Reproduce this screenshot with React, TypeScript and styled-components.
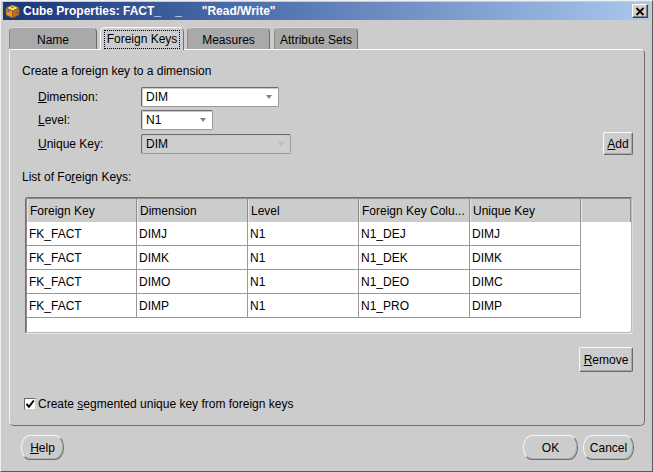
import React from 'react';
import styled, { createGlobalStyle } from 'styled-components';

const Global = createGlobalStyle`
  html, body { margin: 0; padding: 0; background: #cccccc; }
  body { font-family: "Liberation Sans", Arial, sans-serif; font-size: 12px; color: #000; }
  * { box-sizing: border-box; }
`;

const Window = styled.div`
  width: 653px;
  height: 472px;
  background: #cccccc;
  border: 1px solid;
  border-color: #efefef #5a5a5a #5a5a5a #efefef;
  padding: 1px 2px 2px 2px;
  display: flex;
  flex-direction: column;
`;

const TitleBar = styled.div`
  height: 18px;
  display: flex;
  align-items: center;
  padding: 0 2px 0 2px;
  background: linear-gradient(to right, #18357a 0%, #4a6aa8 35%, #a8c8ee 100%);
  color: #fff;
  font: bold 12px "Liberation Sans", Arial, sans-serif;
  white-space: pre;
`;

const TitleIcon = styled.svg`
  width: 15px;
  height: 15px;
  margin-right: 3px;
  flex: none;
`;

const TitleText = styled.span`
  flex: 1;
`;

const Gap = styled.span<{ $w: number }>`
  display: inline-block;
  width: ${p => p.$w}px;
`;

const CloseBtn = styled.div`
  width: 16px;
  height: 14px;
  background: #d4d0c8;
  border: 1px solid;
  border-color: #ffffff #404040 #404040 #ffffff;
  box-shadow: inset -1px -1px 0 #808080;
  display: flex;
  align-items: center;
  justify-content: center;
`;

const Body = styled.div`
  flex: 1;
  display: flex;
  flex-direction: column;
  padding: 0 6px 0 6px;
`;

const TabRow = styled.div`
  display: flex;
  margin-top: 7px;
  height: 22px;
  align-items: flex-end;
  position: relative;
  z-index: 1;
`;

const Tab = styled.div<{ $w: number; $active?: boolean; $ml: number }>`
  width: ${p => p.$w}px;
  margin-left: ${p => p.$ml}px;
  height: ${p => (p.$active ? 23 : 22)}px;
  margin-bottom: ${p => (p.$active ? -1 : 0)}px;
  border: 1px solid;
  border-bottom: none;
  border-color: ${p => (p.$active ? '#ffffff #707070 transparent #ffffff' : '#d8d8d8 #6a6a6a transparent #8a8a8a')};
  border-radius: 5px 5px 0 0;
  background: ${p => (p.$active ? '#cccccc' : '#a9a9a9')};
  display: flex;
  align-items: flex-start;
  justify-content: center;
  padding-top: 2px;
  font-size: 12px;
`;

const FocusLabel = styled.span`
  border: 1px dotted #000;
  padding: 1px 2px 2px 2px;
  line-height: 14px;
`;

const TabLabel = styled.span`
  padding-top: 3px;
  line-height: 14px;
`;

const Panel = styled.div`
  width: 636px;
  height: 377px;
  border: 1px solid;
  border-color: #ffffff #6e6e6e #6e6e6e #f4f4f4;
  border-radius: 0 5px 5px 5px;
  display: flex;
  flex-direction: column;
  padding: 0 11px 0 12px;
`;

const Heading = styled.div<{ $mt: number }>`
  margin-top: ${p => p.$mt}px;
  line-height: 14px;
  height: 14px;
`;

const FormRow = styled.div<{ $mt: number; $h: number }>`
  display: flex;
  align-items: center;
  margin-top: ${p => p.$mt}px;
  height: ${p => p.$h}px;
  padding-left: 16px;
`;

const Label = styled.div`
  width: 103px;
  line-height: 14px;
`;

const Combo = styled.div<{ $w: number; $disabled?: boolean }>`
  width: ${p => p.$w}px;
  height: 20px;
  border: 1px solid;
  border-color: #6a6a6a #9a9a9a #9a9a9a #6a6a6a;
  border-radius: 2px;
  background: ${p => (p.$disabled ? '#cecece' : '#ffffff')};
  box-shadow: inset 1px 1px 0 #c8c8c8;
  display: flex;
  align-items: center;
  padding: 0 4px;
  line-height: 14px;
`;

const ComboText = styled.span`
  flex: 1;
`;

const Arrow = styled.span<{ $disabled?: boolean }>`
  width: 0;
  height: 0;
  border-left: 3.5px solid transparent;
  border-right: 3.5px solid transparent;
  border-top: 4px solid ${p => (p.$disabled ? '#bcbcbc' : '#808080')};
  margin-right: 2px;
`;

const SquareButton = styled.button<{ $w: number; $h: number }>`
  width: ${p => p.$w}px;
  height: ${p => p.$h}px;
  margin-left: auto;
  padding: 0;
  background: #cccccc;
  border: 1px solid;
  border-color: #fafafa #6a6a6a #6a6a6a #fafafa;
  border-radius: 2px;
  box-shadow: inset -1px -1px 0 #a8a8a8;
  font: 12px "Liberation Sans", Arial, sans-serif;
  color: #000;
`;

const RightRow = styled.div<{ $mt: number }>`
  display: flex;
  margin-top: ${p => p.$mt}px;
`;

const U = styled.span`
  text-decoration: underline;
`;

const TableFrame = styled.div`
  margin: 13px 0 0 3px;
  height: 137px;
  border: 1px solid;
  border-color: #707070 #d8d8d8 #eaeaea #707070;
  border-radius: 3px;
  box-shadow: inset 1px 1px 0 #8c8c8c, inset -1px -1px 0 #b8b8b8;
  background: #ffffff;
  padding: 1px 1px 0 1px;
  overflow: hidden;
`;

const Grid = styled.div<{ $header?: boolean }>`
  display: grid;
  grid-template-columns: 110px 111px 111px 111px 111px 1fr;
  height: ${p => (p.$header ? 23 : 24)}px;
  background: ${p => (p.$header ? '#cccccc' : '#ffffff')};
`;

const HeadCell = styled.div`
  border-right: 1px solid #8e8e8e;
  box-shadow: inset 1px 0 0 #e4e4e4;
  padding-left: 3px;
  display: flex;
  align-items: center;
  white-space: nowrap;
  overflow: hidden;
`;

const Cell = styled.div`
  border-right: 1px solid #9a9a9a;
  border-bottom: 1px solid #9a9a9a;
  padding-left: 2px;
  display: flex;
  align-items: center;
  padding-top: 1px;
`;

const Blank = styled.div``;

const CheckRow = styled.div<{ $mt: number }>`
  display: flex;
  align-items: center;
  margin-top: ${p => p.$mt}px;
  margin-left: 2px;
  height: 14px;
`;

const CheckBox = styled.div`
  width: 12px;
  height: 12px;
  background: #fff;
  border: 1px solid;
  border-color: #6a6a6a #d0d0d0 #d0d0d0 #6a6a6a;
  display: flex;
  align-items: center;
  justify-content: center;
  margin-right: 2px;
`;

const Footer = styled.div`
  display: flex;
  margin-top: 9px;
  padding: 0 10px 0 12px;
  gap: 5px;
`;

const PillButton = styled.button<{ $w: number }>`
  width: ${p => p.$w}px;
  height: 25px;
  padding: 0;
  background: #cccccc;
  border: 1px solid;
  border-color: #f6f6f6 #707070 #707070 #f6f6f6;
  border-radius: 9px / 12px;
  box-shadow: inset -1px -1px 0 #b0b0b0;
  font: 12px "Liberation Sans", Arial, sans-serif;
  color: #000;
`;

const Spacer = styled.div`
  flex: 1;
`;

const rows = [
  ['FK_FACT', 'DIMJ', 'N1', 'N1_DEJ', 'DIMJ'],
  ['FK_FACT', 'DIMK', 'N1', 'N1_DEK', 'DIMK'],
  ['FK_FACT', 'DIMO', 'N1', 'N1_DEO', 'DIMC'],
  ['FK_FACT', 'DIMP', 'N1', 'N1_PRO', 'DIMP'],
];

export default function App() {
  return (
    <>
      <Global />
      <Window>
        <TitleBar>
          <TitleIcon viewBox="0 0 15 15">
            <polygon points="7.5,1 14,4 7.5,7 1,4" fill="#f8e070" stroke="#8a5a10" strokeWidth="0.8" />
            <polygon points="1,4 7.5,7 7.5,14 1,11" fill="#e89828" stroke="#8a5a10" strokeWidth="0.8" />
            <polygon points="14,4 7.5,7 7.5,14 14,11" fill="#c87010" stroke="#8a5a10" strokeWidth="0.8" />
            <rect x="2.2" y="6" width="2.2" height="2.2" fill="#3a6ad8" />
            <rect x="10.5" y="7.5" width="2.2" height="2.2" fill="#3a6ad8" />
            <rect x="6.4" y="2.6" width="2.2" height="1.4" fill="#3a6ad8" />
          </TitleIcon>
          <TitleText>
            Cube Properties: FACT_<Gap $w={14} />_<Gap $w={20} />"Read/Write"
          </TitleText>
          <CloseBtn>
            <svg width="10" height="9" viewBox="0 0 10 9">
              <path d="M1.5 1 L8.5 8 M8.5 1 L1.5 8" stroke="#000" strokeWidth="1.8" />
            </svg>
          </CloseBtn>
        </TitleBar>
        <Body>
          <TabRow>
            <Tab $w={88} $ml={0}><TabLabel>Name</TabLabel></Tab>
            <Tab $w={84} $ml={3} $active><FocusLabel>Foreign Keys</FocusLabel></Tab>
            <Tab $w={83} $ml={3}><TabLabel>Measures</TabLabel></Tab>
            <Tab $w={84} $ml={4}><TabLabel>Attribute Sets</TabLabel></Tab>
          </TabRow>
          <Panel>
            <Heading $mt={14}>Create a foreign key to a dimension</Heading>
            <FormRow $mt={9} $h={20}>
              <Label><U>D</U>imension:</Label>
              <Combo $w={138}><ComboText>DIM</ComboText><Arrow /></Combo>
            </FormRow>
            <FormRow $mt={2} $h={21}>
              <Label><U>L</U>evel:</Label>
              <Combo $w={72}><ComboText>N1</ComboText><Arrow /></Combo>
            </FormRow>
            <FormRow $mt={2} $h={23}>
              <Label><U>U</U>nique Key:</Label>
              <Combo $w={150} $disabled><ComboText>DIM</ComboText><Arrow $disabled /></Combo>
              <SquareButton $w={30} $h={23}><U>A</U>dd</SquareButton>
            </FormRow>
            <Heading $mt={15}>List of Fo<U>r</U>eign Keys:</Heading>
            <TableFrame>
              <Grid $header>
                <HeadCell>Foreign Key</HeadCell>
                <HeadCell>Dimension</HeadCell>
                <HeadCell>Level</HeadCell>
                <HeadCell>Foreign Key Colu...</HeadCell>
                <HeadCell>Unique Key</HeadCell>
                <HeadCell />
              </Grid>
              {rows.map((r, i) => (
                <Grid key={i}>
                  {r.map((c, j) => (
                    <Cell key={j}>{c}</Cell>
                  ))}
                  <Blank />
                </Grid>
              ))}
            </TableFrame>
            <RightRow $mt={13}>
              <SquareButton $w={54} $h={25}><U>R</U>emove</SquareButton>
            </RightRow>
            <CheckRow $mt={25}>
              <CheckBox>
                <svg width="10" height="10" viewBox="0 0 10 10">
                  <path d="M1.5 5 L4 7.8 L8.8 1.5" stroke="#000" strokeWidth="2" fill="none" />
                </svg>
              </CheckBox>
              <span>Create <U>s</U>egmented unique key from foreign keys</span>
            </CheckRow>
          </Panel>
          <Footer>
            <PillButton $w={43}><U>H</U>elp</PillButton>
            <Spacer />
            <PillButton $w={55}>OK</PillButton>
            <PillButton $w={51}>Cancel</PillButton>
          </Footer>
        </Body>
      </Window>
    </>
  );
}
